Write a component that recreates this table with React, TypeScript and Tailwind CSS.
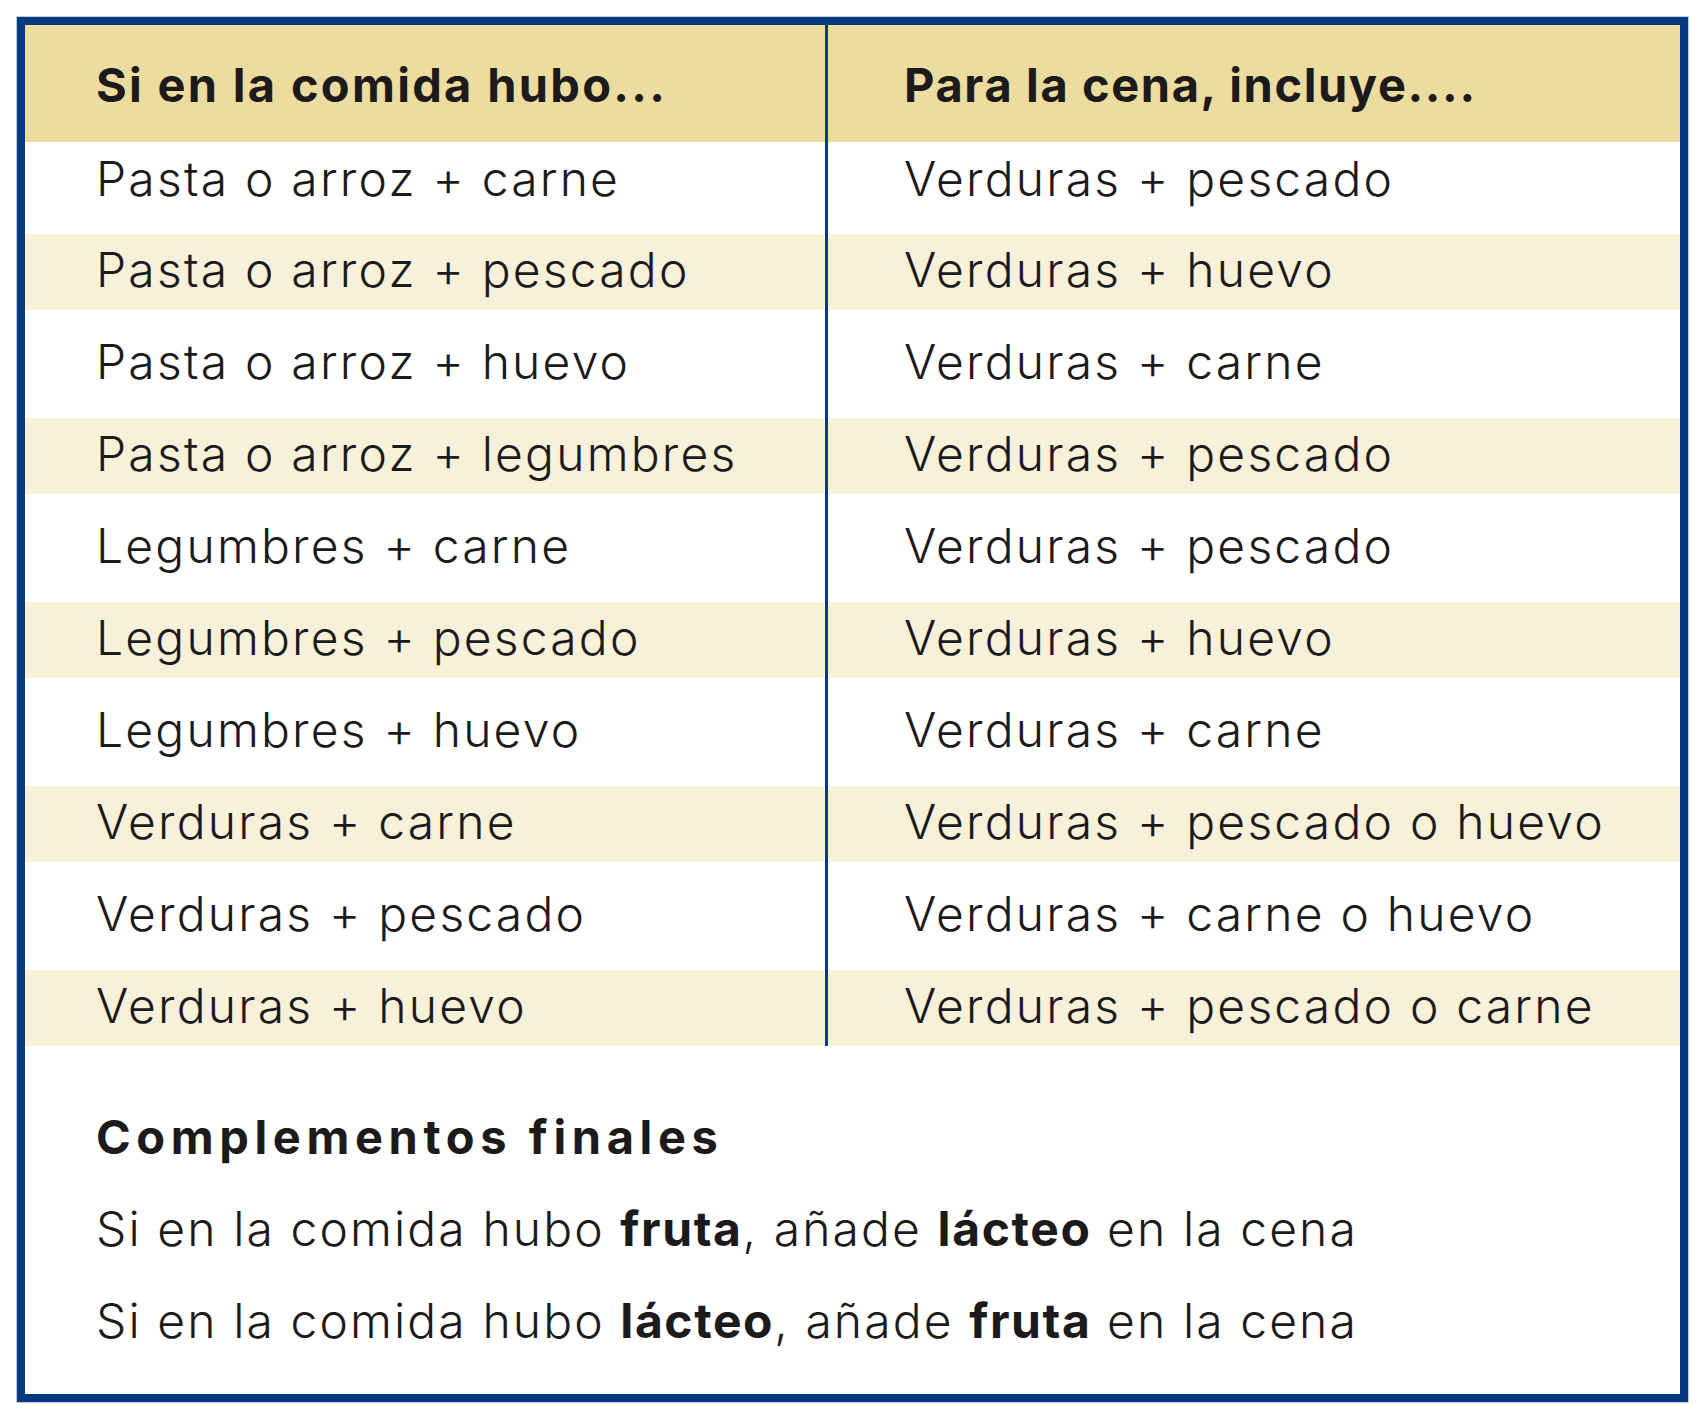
const ROWS: [string, string][] = [
  ['Pasta o arroz + carne', 'Verduras + pescado'],
  ['Pasta o arroz + pescado', 'Verduras + huevo'],
  ['Pasta o arroz + huevo', 'Verduras + carne'],
  ['Pasta o arroz + legumbres', 'Verduras + pescado'],
  ['Legumbres + carne', 'Verduras + pescado'],
  ['Legumbres + pescado', 'Verduras + huevo'],
  ['Legumbres + huevo', 'Verduras + carne'],
  ['Verduras + carne', 'Verduras + pescado o huevo'],
  ['Verduras + pescado', 'Verduras + carne o huevo'],
  ['Verduras + huevo', 'Verduras + pescado o carne'],
];

export default function App() {
  return (
    <div className="min-h-screen bg-white pt-[16px] pl-[16px] font-['Inter','Liberation_Sans',sans-serif] text-[#1c1a1b]">
      <div className="w-[1673px] border border-[#bccbe0]">
        <div className="border-8 border-[#05397f] bg-white">
          {/* Header */}
          <div className="grid grid-cols-[800px_3px_1fr] h-[117px] bg-[#ecdca0]">
            <div className="flex items-center pl-[71px] pt-[4px] text-[47px] font-bold tracking-[2.3px]">
              Si en la comida hubo...
            </div>
            <div className="bg-[#0a3c8c]" />
            <div className="flex items-center pl-[76px] pt-[4px] text-[47px] font-bold tracking-[1.6px]">
              Para la cena, incluye....
            </div>
          </div>

          {/* Rows */}
          {ROWS.map(([left, right], i) => {
            const tan = i % 2 === 1;
            const height = i === 0 ? 'h-[92px] pb-[18px]' : tan ? 'h-[76px] pb-[4px]' : 'h-[108px] pb-[4px]';
            return (
              <div key={i} className={`grid grid-cols-[800px_3px_1fr] ${tan ? 'bg-[#f8f1da]' : 'bg-white'}`}>
                <div className={`flex items-center pl-[71px] text-[48px] font-light tracking-[2.2px] ${height}`}>{left}</div>
                <div className="bg-[#0a3c8c]" />
                <div className={`flex items-center pl-[76px] text-[48px] font-light tracking-[2.2px] ${height}`}>{right}</div>
              </div>
            );
          })}

          {/* Complementos */}
          <div className="pl-[71px] pt-[45px] pb-[27px]">
            <div className="flex h-[92px] items-center text-[47px] font-bold tracking-[5.6px]">Complementos finales</div>
            <div className="flex h-[92px] items-center text-[48px] font-light tracking-[2.1px] whitespace-pre">
              Si en la comida hubo <b className="font-bold tracking-[1.6px]">fruta</b>, añade <b className="font-bold tracking-[1.6px]">lácteo</b> en la cena
            </div>
            <div className="flex h-[92px] items-center text-[48px] font-light tracking-[2.1px] whitespace-pre">
              Si en la comida hubo <b className="font-bold tracking-[1.6px]">lácteo</b>, añade <b className="font-bold tracking-[1.6px]">fruta</b> en la cena
            </div>
          </div>
        </div>
      </div>
    </div>
  );
}
